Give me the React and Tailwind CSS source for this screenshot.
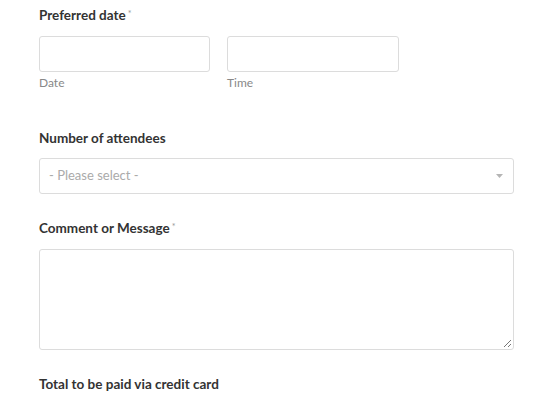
export default function App() {
  const label = "text-[13.5px] leading-[20px] font-bold text-[#333]";
  const star = <span className="text-[9px] font-normal text-[#999] align-top relative top-[-1px] ml-[2px]">*</span>;
  return (
    <div className="w-[554px] h-[400px] bg-white overflow-hidden pl-[39px] pr-[40px] pt-[5px]" style={{ fontFamily: 'Lato, "Liberation Sans", sans-serif' }}>
      <div className={label}>Preferred date{star}</div>
      <div className="flex gap-[17px] mt-[11px]">
        <div className="flex flex-col w-[171px]">
          <div className="h-[36px] border border-[#dcdcdc] rounded-[3px] bg-white"></div>
          <div className="text-[12px] leading-[16px] text-[#888] mt-[3px]">Date</div>
        </div>
        <div className="flex flex-col w-[172px]">
          <div className="h-[36px] border border-[#dcdcdc] rounded-[3px] bg-white"></div>
          <div className="text-[12px] leading-[16px] text-[#888] mt-[3px]">Time</div>
        </div>
      </div>
      <div className={label + " mt-[37px]"}>Number of attendees</div>
      <div className="mt-[10px] h-[36px] border border-[#dcdcdc] rounded-[3px] flex items-center justify-between pl-[9px] pr-[10px]">
        <span className="text-[13px] text-[#aaa]">- Please select -</span>
        <svg width="7" height="4" viewBox="0 0 7 4"><path d="M0 0h7L3.5 4z" fill="#b5b5b5" /></svg>
      </div>
      <div className={label + " mt-[24px]"}>Comment or Message{star}</div>
      <div className="mt-[11px] h-[101px] border border-[#dcdcdc] rounded-[3px] relative">
        <svg className="absolute right-[1px] bottom-[1px]" width="10" height="10" viewBox="0 0 10 10">
          <path d="M9 2L2 9M9 6L6 9" stroke="#777" strokeWidth="1" />
        </svg>
      </div>
      <div className={label + " mt-[24px]"}>Total to be paid via credit card</div>
    </div>
  );
}
